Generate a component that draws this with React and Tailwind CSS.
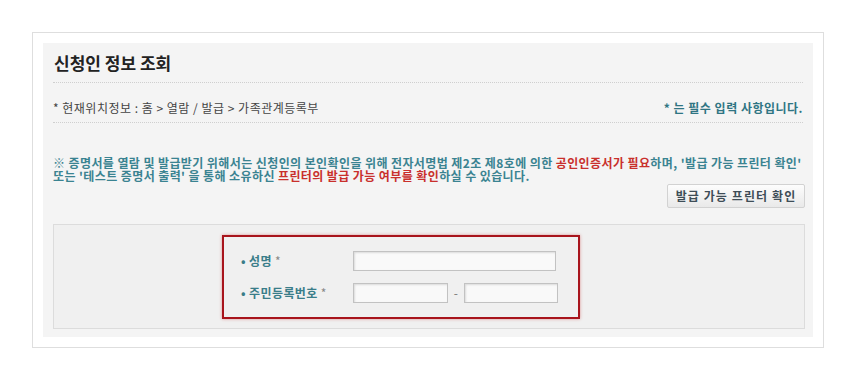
import React from 'react';

const font = { fontFamily: '"Noto Sans CJK KR", "Noto Sans", sans-serif' };

function Field({ className }) {
  return (
    <div
      className={`h-[20px] border border-[#c2c2c2] bg-[#f9f9f9] shadow-[inset_1px_1px_2px_rgba(0,0,0,0.12)] ${className}`}
    />
  );
}

export default function App() {
  return (
    <div className="w-[856px] h-[380px] bg-white pt-[32px] pl-[32px]" style={font}>
      {/* outer card */}
      <div className="w-[792px] h-[316px] border border-[#dedede] bg-white p-[10px]">
        {/* grey panel */}
        <div className="h-full bg-[#f4f4f4] pl-[10px] pr-[8px]">
          <div className="pt-[8px] pb-[7px] pl-[1px] border-b border-dotted border-[#cfcfcf] mr-[2px]">
            <h1 className="text-[17px] leading-[24px] font-bold text-[#222]">신청인 정보 조회</h1>
          </div>

          <div className="h-[40px] pt-[10px] flex items-center justify-between border-b border-dotted border-[#cfcfcf] mr-[2px] text-[12px] tracking-[0.5px]">
            <span className="text-[#444]">* 현재위치정보 : 홈 &gt; 열람 / 발급 &gt; 가족관계등록부</span>
            <span className="text-[#2f7583] font-bold">* 는 필수 입력 사항입니다.</span>
          </div>

          {/* notice */}
          <div className="mt-[33px] text-[12px] leading-[13px] font-bold text-[#3a8391] tracking-[0.4px]">
            <div>
              ※ 증명서를 열람 및 발급받기 위해서는 신청인의 본인확인을 위해 전자서명법 제2조 제8호에 의한{' '}
              <span className="text-[#c9302c]">공인인증서가 필요</span>하며, '발급 가능 프린터 확인'
            </div>
            <div>
              또는 '테스트 증명서 출력' 을 통해 소유하신{' '}
              <span className="text-[#c9302c]">프린터의 발급 가능 여부를 확인</span>하실 수 있습니다.
            </div>
          </div>

          <div className="mt-[2px] flex justify-end">
            <button className="h-[24px] w-[138px] border border-[#d2d2d2] bg-gradient-to-b from-[#fdfdfd] to-[#e9e9e9] text-[12px] tracking-[1.1px] font-bold text-[#3e4d57] rounded-[2px]">
              발급 가능 프린터 확인
            </button>
          </div>

          {/* form box */}
          <div className="mt-[16px] h-[105px] border border-[#dcdcdc] bg-[#f0f0f0] pt-[10px] pl-[168px]">
            <div className="w-[358px] h-[84px] border-2 border-[#a8141c] shadow-[0_0_3px_rgba(200,40,40,0.45)] pl-[17px] pt-[14px] text-[12px] tracking-[0.4px] font-bold text-[#3a7d89]">
              <div className="flex items-center h-[20px]">
                <span className="w-[112px]">• 성명 <span className="text-[#888] font-normal">*</span></span>
                <Field className="w-[203px]" />
              </div>
              <div className="flex items-center h-[20px] mt-[12px]">
                <span className="w-[112px]">• 주민등록번호 <span className="text-[#888] font-normal">*</span></span>
                <Field className="w-[95px]" />
                <span className="w-[16px] text-center text-[#777] font-normal">-</span>
                <Field className="w-[94px]" />
              </div>
            </div>
          </div>
        </div>
      </div>
    </div>
  );
}
